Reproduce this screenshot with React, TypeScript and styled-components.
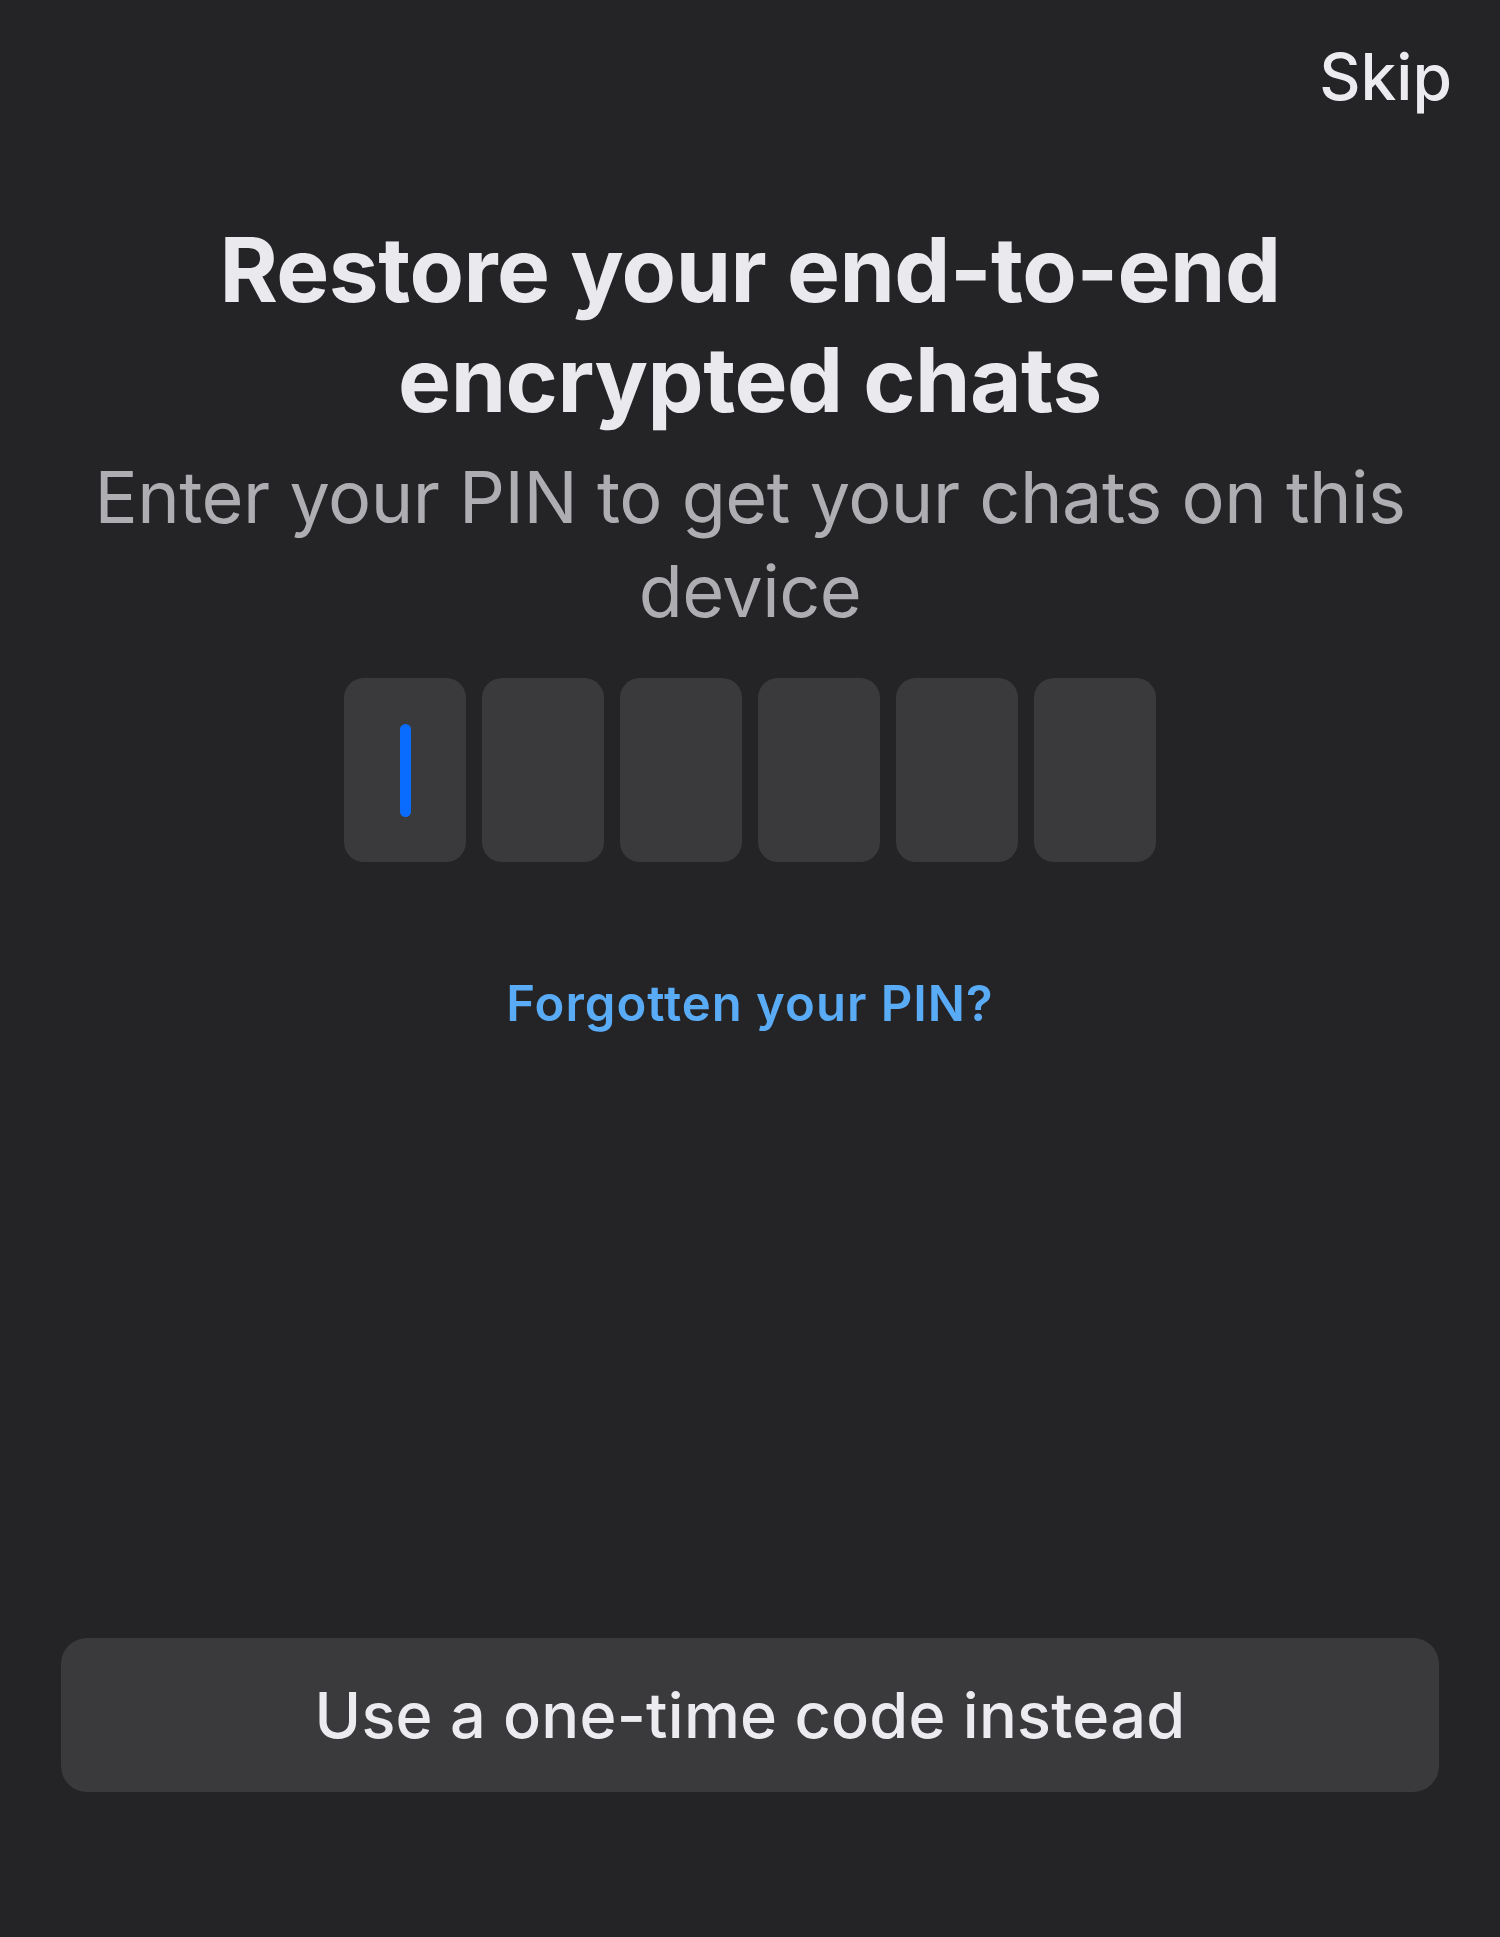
import React from "react";
import styled, { createGlobalStyle } from "styled-components";

const Global = createGlobalStyle`
  html, body { margin: 0; padding: 0; background: #242426; }
  body { font-family: Inter, "Noto Sans", "Liberation Sans", sans-serif; -webkit-font-smoothing: antialiased; }
`;

const Screen = styled.div`
  width: 1500px;
  height: 1937px;
  box-sizing: border-box;
  background: #242426;
  display: flex;
  flex-direction: column;
  align-items: center;
  padding: 39px 0 145px;
`;

const TopBar = styled.div`
  align-self: stretch;
  display: flex;
  justify-content: flex-end;
  padding-right: 48px;
`;

const SkipButton = styled.button`
  background: none;
  border: none;
  padding: 0;
  font-family: inherit;
  font-size: 64px;
  line-height: 76px;
  font-weight: 500;
  color: #ececf0;
  letter-spacing: 0px;
`;

const Title = styled.h1`
  margin: 100px 0 0;
  font-size: 89px;
  line-height: 110px;
  font-weight: 700;
  color: #eaeaee;
  text-align: center;
  letter-spacing: -0.5px;
  max-width: 1150px;
`;

const Subtitle = styled.p`
  margin: 15px 0 0;
  font-size: 72px;
  line-height: 94px;
  font-weight: 400;
  color: #aeaeb2;
  text-align: center;
  max-width: 1340px;
  letter-spacing: -0.5px;
`;

const PinRow = styled.div`
  margin-top: 40px;
  display: flex;
  gap: 16px;
`;

const PinBox = styled.div`
  width: 122px;
  height: 184px;
  border-radius: 20px;
  background: #3a3a3c;
  display: flex;
  align-items: center;
  justify-content: center;
`;

const Caret = styled.div`
  width: 11px;
  height: 93px;
  border-radius: 6px;
  background: #0a6cff;
`;

const ForgotLink = styled.a`
  margin-top: 113px;
  font-size: 49px;
  line-height: 58px;
  font-weight: 600;
  color: #5aabf5;
  text-decoration: none;
  letter-spacing: 1px;
`;

const OtpButton = styled.button`
  margin-top: auto;
  width: 1378px;
  height: 154px;
  border: none;
  border-radius: 26px;
  background: #3a3a3c;
  font-family: inherit;
  font-size: 63px;
  font-weight: 500;
  color: #ececf0;
  letter-spacing: 0.25px;
`;

export default function App() {
  return (
    <>
      <Global />
      <Screen>
        <TopBar>
          <SkipButton>Skip</SkipButton>
        </TopBar>
        <Title>Restore your end-to-end encrypted chats</Title>
        <Subtitle>Enter your PIN to get your chats on this device</Subtitle>
        <PinRow>
          {[0, 1, 2, 3, 4, 5].map((i) => (
            <PinBox key={i}>{i === 0 && <Caret />}</PinBox>
          ))}
        </PinRow>
        <ForgotLink href="#">Forgotten your PIN?</ForgotLink>
        <OtpButton>Use a one-time code instead</OtpButton>
      </Screen>
    </>
  );
}
